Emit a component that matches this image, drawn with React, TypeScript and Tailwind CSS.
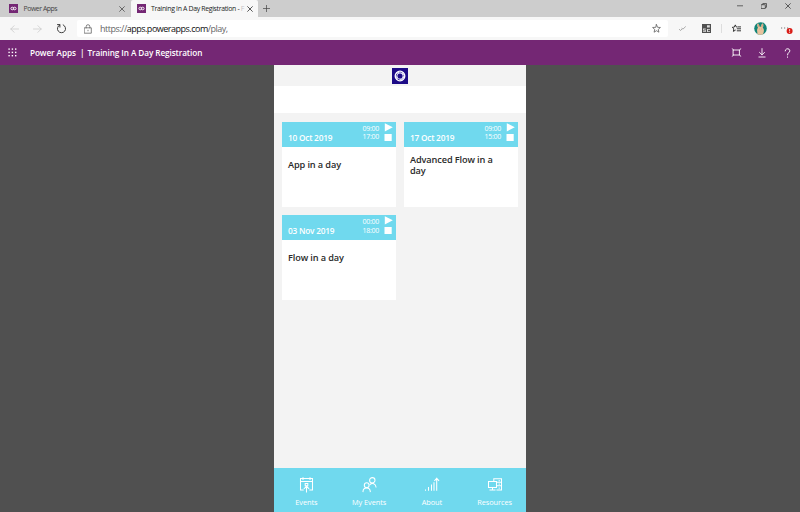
import React from "react";

const line = { fill: "none", stroke: "currentColor", strokeLinecap: "square" } as const;

function AppMark() {
  return (
    <svg className="h-[9px] w-[9px] shrink-0" viewBox="0 0 9 9">
      <rect width="9" height="9" fill="#742774" />
      <ellipse cx="3.3" cy="4.5" rx="1.4" ry="1.3" fill="none" stroke="#fff" strokeWidth=".9" />
      <ellipse cx="5.7" cy="4.5" rx="1.4" ry="1.3" fill="none" stroke="#fff" strokeWidth=".9" />
    </svg>
  );
}

function Cross({ className = "" }: { className?: string }) {
  return (
    <svg className={"shrink-0 " + className} viewBox="0 0 6 6">
      <path d="M.7.7 5.3 5.3M5.3.7.7 5.3" {...line} strokeWidth=".75" />
    </svg>
  );
}

function TabStrip() {
  return (
    <div className="flex h-[17px] bg-[#cdcdcd] text-[6.9px] text-[#444]">
      <div className="flex w-[131px] items-center pl-[9px] pr-[6px]">
        <AppMark />
        <span className="ml-[5.5px] flex-1 pt-px tracking-[-0.45px]">Power Apps</span>
        <Cross className="h-[6px] w-[6px]" />
      </div>
      <div className="flex w-[127px] items-center rounded-t-[2px] bg-[#f7f7f7] pl-[6px] pr-[5px] text-[#222]">
        <AppMark />
        <span className="ml-[5px] whitespace-nowrap pt-px tracking-[-0.32px]">
          Training In A Day Registration - <span className="text-[#c4c4c4]">F</span>
        </span>
        <Cross className="ml-auto h-[6px] w-[6px]" />
      </div>
      <svg className="ml-[5px] mt-[5px] h-[7px] w-[7px]" viewBox="0 0 7 7">
        <path d="M3.5.3v6.4M.3 3.5h6.4" {...line} strokeWidth=".7" />
      </svg>
      <div className="ml-auto flex items-start gap-[18px] pr-[9px] pt-[3px] text-[#333]">
        <svg className="h-[6px] w-[6px]" viewBox="0 0 6 6"><path d="M.4 2.8h5.2" {...line} strokeWidth=".7" /></svg>
        <svg className="h-[6px] w-[6px]" viewBox="0 0 6 6"><path d="M.5 1.7h3.8v3.8H.5ZM1.8 1.5V.5h3.7v3.8h-1" {...line} strokeWidth=".7" /></svg>
        <Cross className="h-[6px] w-[6px]" />
      </div>
    </div>
  );
}

function AddressBar() {
  return (
    <div className="flex h-[23px] items-center bg-[#f7f7f7]">
      <svg className="ml-[10px] h-[8px] w-[9px] text-[#c6c6c6]" viewBox="0 0 9 8"><path d="M8.4 4H.8M4 .8.8 4 4 7.2" {...line} strokeWidth=".7" /></svg>
      <svg className="ml-[14px] h-[8px] w-[9px] text-[#c6c6c6]" viewBox="0 0 9 8"><path d="M.6 4h7.6M5 .8 8.2 4 5 7.2" {...line} strokeWidth=".7" /></svg>
      <svg className="ml-[14px] h-[11px] w-[11px] text-[#333]" viewBox="0 0 11 11"><path d="M3.7 1.9A4.1 4.1 0 1 0 7.3 1.9M3.9 4V1.6H1.6" {...line} strokeWidth=".95" /></svg>
      <div className="ml-[10px] flex h-[17px] w-[591px] items-center rounded-[2px] bg-white pl-[7px] pr-[7px]">
        <svg className="h-[10px] w-[8px] text-[#666]" viewBox="0 0 8 10"><path d="M.7 3.8h6.6v5.4H.7ZM2.2 3.8V2.5a1.8 1.8 0 0 1 3.6 0v1.3M4 6.3v.4" {...line} strokeWidth=".8" /></svg>
        <span className="ml-[8px] text-[9px] tracking-[-0.5px] text-[#666]">
          https://<span className="text-[#111]">apps.powerapps.com</span>/play,
        </span>
        <svg className="ml-auto h-[9px] w-[9px] text-[#555]" viewBox="0 0 9 9"><path d="m4.5.7 1.1 2.6 2.8.2-2.1 1.9.6 2.8-2.4-1.5-2.4 1.5.6-2.8L.6 3.5l2.8-.2Z" {...line} strokeWidth=".75" /></svg>
      </div>
      <svg className="ml-[11px] h-[7px] w-[7px] text-[#aaa]" viewBox="0 0 7 7"><path d="m.5 4.4 1 1.2 1.3-1.4M3 3.4l1 .7L6.4 1.8" {...line} strokeWidth="1" /></svg>
      <svg className="ml-[16px] h-[9px] w-[9px]" viewBox="0 0 9 9">
        <path d="M0 0h9v9H0Z" fill="#505050" />
        <path d="M5 1.3h2.8v2.2H5ZM1 4.6h2.8v.8H1.8v.7h2v1.9H1v-.8h2v-.6H1ZM5 5h3v.8H6v1.5h2v.8H5" fill="#ddd" />
      </svg>
      <div className="ml-[10px] h-[9px] w-px bg-[#ddd]" />
      <svg className="ml-[10px] h-[9px] w-[9px] text-[#222]" viewBox="0 0 9 9"><path d="m4.8 3-.6-.1L3.3.9l-1 2.2-2 .2 1.5 1.6-.4 2.5 1.9-1.2M5.3 4.8h3.2M5.3 6.8h3.2M6 2.9h2.5" {...line} strokeWidth=".9" /></svg>
      <svg className="ml-[13px] h-[13px] w-[13px]" viewBox="0 0 13 13">
        <circle cx="6.5" cy="6.5" r="6.3" fill="#128477" />
        <path d="M3.7 1.3C5 2 5.4 3.2 5.5 4.5L7 4.7C7 3 7.6 1.8 9 1.2c.8 1.8.4 3.5-.3 4.6 1.7 1.1 1.5 4 .3 6.4a6.3 6.3 0 0 1-5.8-.3C4 10 1.9 8.2 4 5.7 2.9 4.2 2.9 2.7 3.7 1.3Z" fill="#e8c29d" />
        <path d="M4.4 2.4 5 5M8.5 2.5 7.8 5M5 7h.5M7.5 7H8" stroke="#b97861" strokeWidth=".6" />
      </svg>
      <svg className="ml-[13px] h-[13px] w-[14px]" viewBox="0 0 14 13">
        <path d="M1 6h1.2M4 6h1.2M7 6h1.2" stroke="#777" strokeWidth="1.1" />
        <circle cx="9.6" cy="9" r="3" fill="#d91d17" />
        <path d="M9.6 7.2v2.2M9.6 10v.8" stroke="#fff" strokeWidth=".8" />
      </svg>
    </div>
  );
}

function SuiteHeader() {
  return (
    <div className="flex h-[25.4px] items-center bg-[#742774] text-white">
      <svg className="ml-[8px] h-[9px] w-[9px]" viewBox="0 0 9 9" fill="#fff">
        {[0.4, 3.7, 7].map((y) => [0.4, 3.7, 7].map((x) => <rect key={x + "-" + y} x={x} y={y} width="1.4" height="1.4" />))}
      </svg>
      <div className="ml-[13px] flex whitespace-pre pt-px text-[8.2px] font-semibold tracking-[-0.08px]">
        <span className="w-[50px]">Power Apps</span>
        <span className="w-[7.5px]">|</span>
        <span>Training In A Day Registration</span>
      </div>
      <svg className="ml-auto h-[9px] w-[11px]" viewBox="0 0 11 9"><path d="M2.6 2h5.8v5H2.6ZM1.2.8 2.6 2M9.8.8 8.4 2M1.2 8.2 2.6 7M9.8 8.2 8.4 7" {...line} strokeWidth=".9" /></svg>
      <svg className="ml-[16px] h-[10px] w-[8px]" viewBox="0 0 8 10"><path d="M4 .7v6M1.6 4.5 4 6.9l2.4-2.4M1 9h6" {...line} strokeWidth=".9" /></svg>
      <svg className="ml-[18px] mr-[9.5px] h-[10px] w-[7px]" viewBox="0 0 7 10"><path d="M1.2 2.8C1.2 0 5.8 0 5.8 2.8 5.8 4.6 3.5 4.6 3.5 6.8M3.5 9v.2" {...line} strokeWidth=".95" /></svg>
    </div>
  );
}

type Event = { date: string; start: string; end: string; title: string; long?: boolean };
const events: Event[] = [
  { date: "10 Oct 2019", start: "09:00", end: "17:00", title: "App in a day" },
  { date: "17 Oct 2019", start: "09:00", end: "15:00", title: "Advanced Flow in a day", long: true },
  { date: "03 Nov 2019", start: "00:00", end: "18:00", title: "Flow in a day" },
];

function EventCard({ date, start, end, title, long }: Event) {
  return (
    <div className="h-[85.4px] bg-white">
      <div className="flex h-[25px] bg-[#70d9ee] text-white">
        <span className="ml-[6px] mt-[10.5px] text-[8.3px] font-semibold leading-[11px] tracking-[-0.23px]">{date}</span>
        <div className="ml-auto mt-[3.3px] text-right text-[7px] leading-[8.5px] tracking-[-0.28px]">
          <div>{start}</div>
          <div>{end}</div>
        </div>
        <svg className="ml-[5px] mr-[3px] mt-[1.5px] h-[19px] w-[9px]" viewBox="0 0 9 19" fill="#fff">
          <path d="M.8.2 8.8 4.3.8 8.4ZM.5 11h7.2v7H.5Z" />
        </svg>
      </div>
      <div className={"pl-[6px] pr-[18px] text-[9.2px] font-semibold leading-[11px] tracking-[-0.12px] text-[#2a2a2a] " + (long ? "pt-[7px]" : "pt-[12px]")}>
        {title}
      </div>
    </div>
  );
}

function NavItem({ label, children }: { label: string; children: React.ReactNode }) {
  return (
    <div className="flex flex-1 flex-col items-center">
      <svg className="mt-[8px] h-[17px] w-[17px]" viewBox="0 0 17 17" {...line} strokeWidth="1.05">{children}</svg>
      <span className="mt-[5px] whitespace-nowrap text-[7.4px] leading-[9px] tracking-[-0.08px]">{label}</span>
    </div>
  );
}

export default function App() {
  return (
    <div className="flex h-[512px] w-[800px] flex-col overflow-hidden bg-[#505050] font-['Open_Sans','Noto_Sans',sans-serif]">
      <TabStrip />
      <AddressBar />
      <SuiteHeader />
      <main className="mx-auto flex w-[252px] flex-1 flex-col bg-[#f3f3f3]">
        <div className="flex h-[20.2px] items-center justify-center pt-[0.6px]">
          <svg className="h-[16px] w-[16px]" viewBox="0 0 16 16">
            <rect width="16" height="16" fill="#1d0b87" />
            <circle cx="8" cy="8" r="4.8" fill="none" stroke="#fff" strokeWidth="1.3" />
            <circle cx="8" cy="8" r="3.1" fill="none" stroke="#e4e0ff" strokeWidth="1.1" />
            <path d="M4 5.4 7 4.2M5.2 11.6 4.6 8.5M10.8 11.8 7.9 11.9M12.2 7.8 11 10.5M10.7 4 11.4 7" stroke="#fff" strokeWidth=".9" />
          </svg>
        </div>
        <div className="h-[27.4px] bg-white" />
        <div className="grid grid-cols-2 gap-[8px] px-[8px] pt-[8.6px]">
          {events.map((e) => <EventCard key={e.date} {...e} />)}
        </div>
        <nav className="mt-auto flex h-[43.6px] bg-[#70d9ee] pl-[1px] text-white">
          <NavItem label="Events">
            <path d="M5.2 14H2.5V2.5h12V14h-2.7M2.5 5.5h12M5 1.8v1.6M12 1.8v1.6M7.2 7.5h2.6v2.3H7.2ZM8.5 10.3V16M6.2 12.6l2.3-2.3 2.3 2.3" />
          </NavItem>
          <NavItem label="My Events">
            <circle cx="5.7" cy="9.2" r="2.4" /><circle cx="11.3" cy="4.3" r="2.7" />
            <path d="M2 15.6c.2-4.9 7-4.9 7.3 0M9.2 8.4c2-2 5.5-.9 5.8 2.6" />
          </NavItem>
          <NavItem label="About">
            <path d="M2.5 14v.2M5.5 11.5v2.7M8.5 9v5.2M11 6.8v7.4M13.7 2.3v11.9M11.7 4.5l2-2.2 2 2.2" />
          </NavItem>
          <NavItem label="Resources">
            <path d="M2.5 5.5h8v6h-8ZM6.5 11.5v2M4 14h5M7.8 5.3V2.8h7.7v11.2h-4.5M10.8 6.2h4.7M10.8 9.8h4.7M13.2 4.5v.1M13.2 8v.1M13.2 12v.1" />
          </NavItem>
        </nav>
      </main>
    </div>
  );
}
